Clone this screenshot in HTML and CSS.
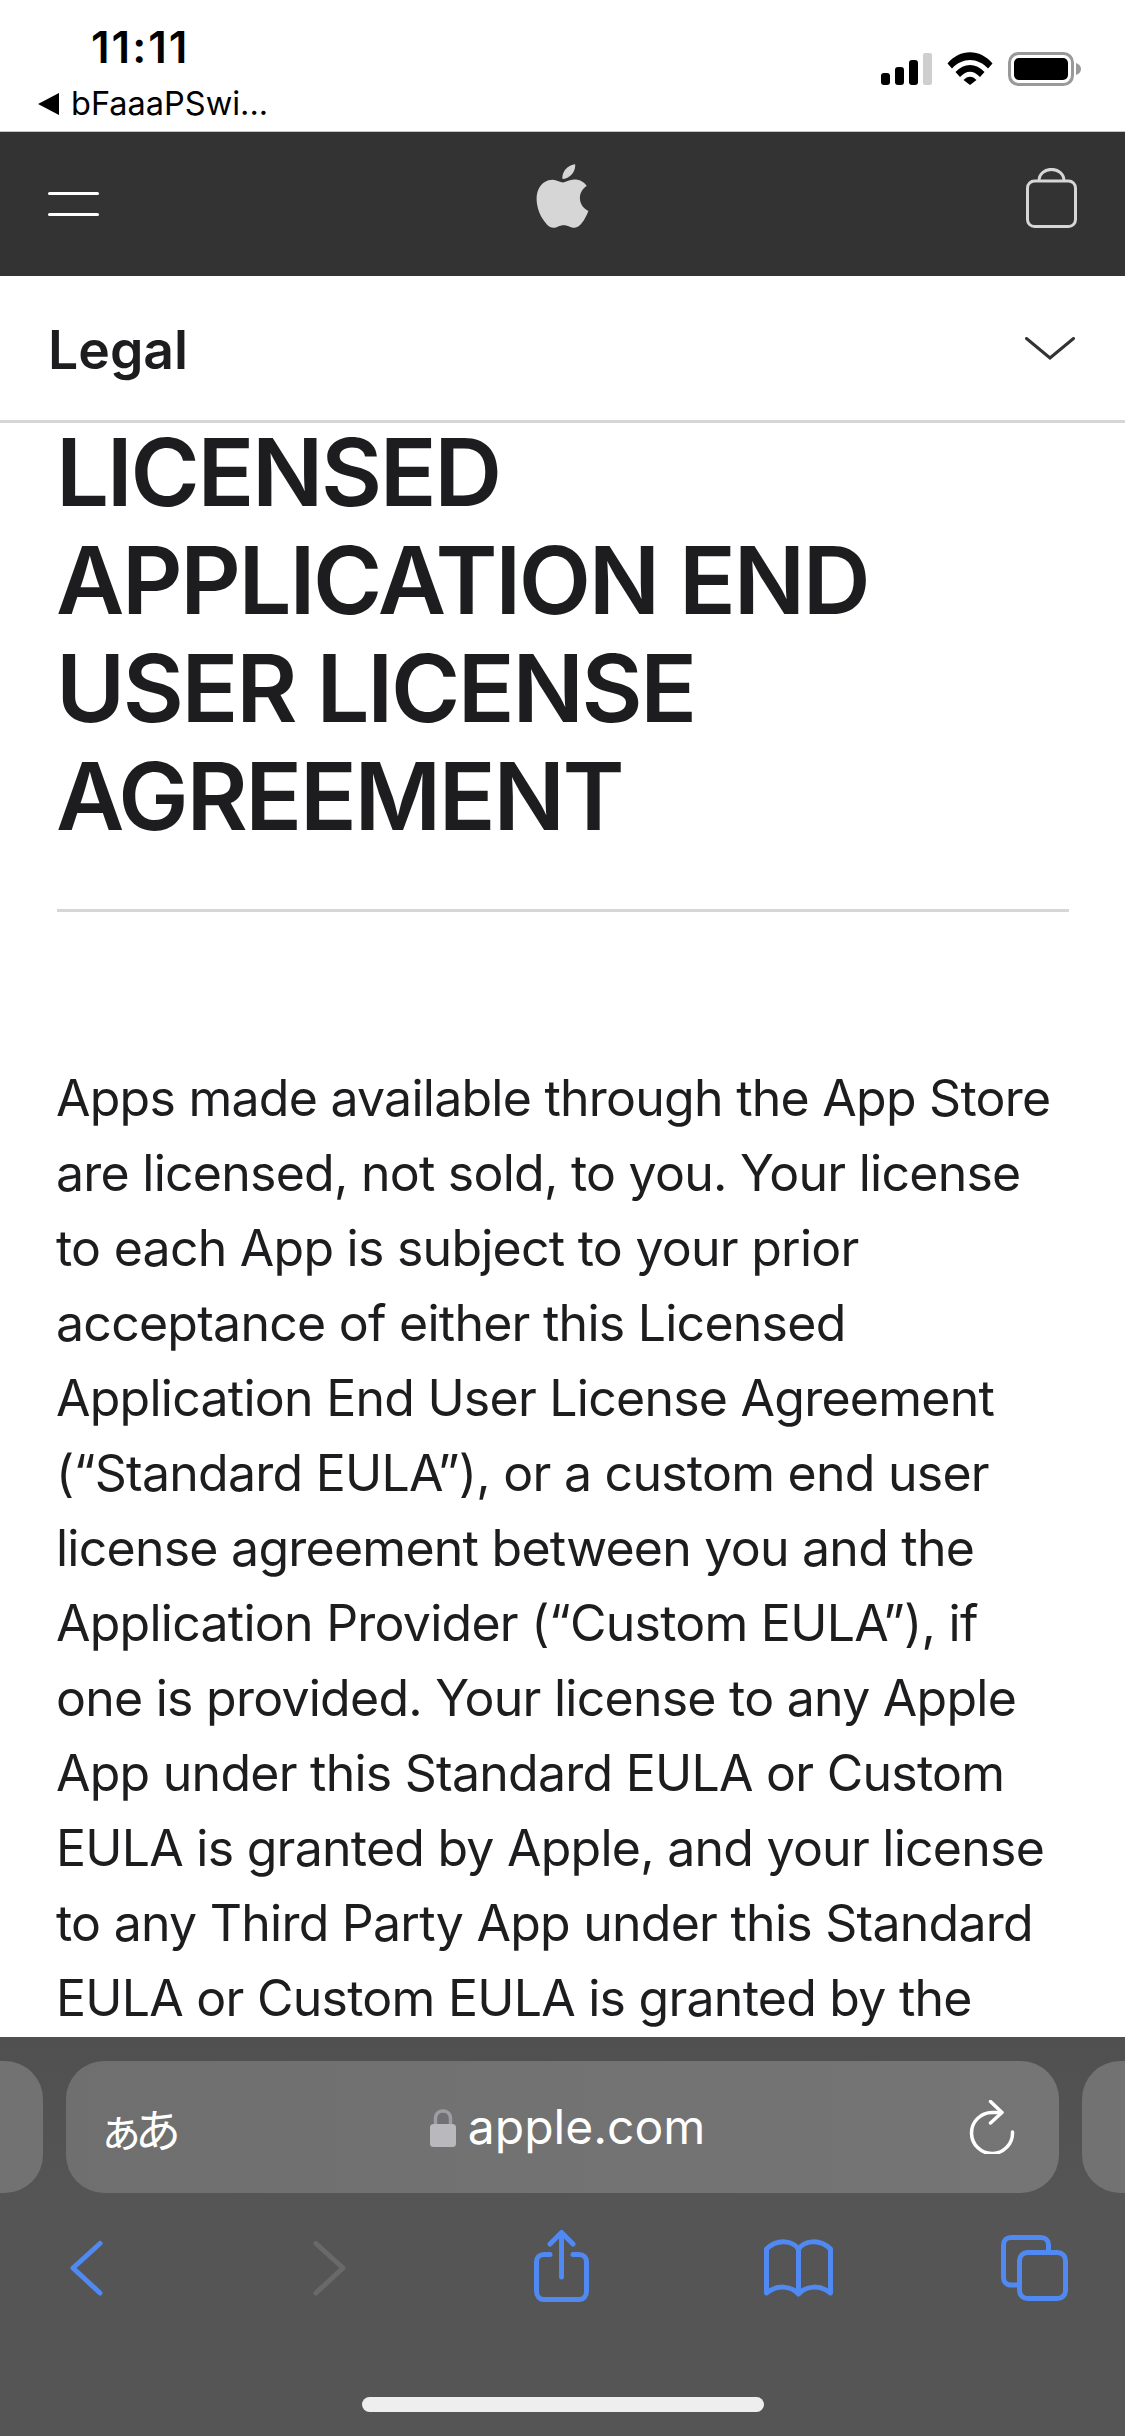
FILE: index.html
```html
<!DOCTYPE html>
<html lang="en">
<head>
    <meta charset="UTF-8">
    <meta name="viewport" content="width=device-width, initial-scale=1.0">
    <title>Licensed Application End User License Agreement</title>
    <link rel="stylesheet" href="styles.css">
</head>
<body>
    <div class="phone">
        <!-- status bar -->
        <div class="status">
            <div class="status-left">
                <div class="time">11:11</div>
                <div class="back-app"><span class="back-arrow"></span>bFaaaPSwi...</div>
            </div>
            <div class="status-right">
                <svg class="ic-signal" viewBox="0 0 51 32">
                    <rect x="0" y="20" width="9" height="12" rx="3" fill="#000"/>
                    <rect x="14" y="14" width="9" height="18" rx="3" fill="#000"/>
                    <rect x="28" y="7" width="9" height="25" rx="3" fill="#000"/>
                    <rect x="42" y="0" width="9" height="32" rx="2" fill="#cfcfcf"/>
                </svg>
                <svg class="ic-wifi" viewBox="0 0 46 33">
                    <path d="M0.5 11.5C13 -3.5 33 -3.5 45.5 11.5L41 16.5C30.5 5 15.5 5 5 16.5Z" fill="#000"/>
                    <path d="M8.5 20C17 10.500 29 10.500 37.500 20L33 25C26 18 20 18 13 25Z" fill="#000"/>
                    <path d="M16.500 28C20.500 23.500 25.500 23.500 29.500 28L23 33Z" fill="#000"/>
                </svg>
                <svg class="ic-battery" viewBox="0 0 74 34">
                    <rect x="1.500" y="1.500" width="63" height="31" rx="9" fill="none" stroke="#999" stroke-width="3"/>
                    <rect x="6" y="6" width="54" height="22" rx="5" fill="#000"/>
                    <path d="M68 11C71 12 73 14 73 17C73 20 71 22 68 23Z" fill="#999"/>
                </svg>
            </div>
        </div>

        <!-- apple nav -->
        <div class="globalnav">
            <div class="burger"><span></span><span></span></div>
            <svg class="ic-apple" viewBox="2 0 20 24">
                <path d="M12.152 6.896c-.948 0-2.415-1.078-3.96-1.04-2.04.027-3.91 1.183-4.961 3.014-2.117 3.675-.546 9.103 1.519 12.09 1.013 1.454 2.208 3.09 3.792 3.039 1.52-.065 2.09-.987 3.935-.987 1.831 0 2.35.987 3.96.948 1.637-.026 2.676-1.48 3.676-2.948 1.156-1.688 1.636-3.325 1.662-3.415-.039-.013-3.182-1.221-3.22-4.857-.026-3.04 2.48-4.494 2.597-4.559-1.429-2.09-3.623-2.324-4.39-2.376-2-.156-3.675 1.09-4.61 1.09zM15.53 3.83c.843-1.012 1.4-2.427 1.245-3.83-1.207.052-2.662.805-3.532 1.818-.78.896-1.454 2.338-1.273 3.714 1.338.104 2.715-.688 3.559-1.701" fill="#d6d6d6"/>
            </svg>
            <svg class="ic-bag" viewBox="0 0 51 60">
                <path d="M13 13C13 -2.500 38 -2.500 38 13" fill="none" stroke="#d6d6d6" stroke-width="3"/>
                <rect x="1.500" y="13" width="48" height="45.500" rx="7" fill="none" stroke="#d6d6d6" stroke-width="3"/>
            </svg>
        </div>

        <div class="subnav">
            <span class="subnav-title">Legal</span>
            <svg class="ic-chevron" viewBox="0 0 50 23">
                <path d="M1.500 1.500L25 21L48.500 1.500" fill="none" stroke="#333" stroke-width="3" stroke-linecap="round"/>
            </svg>
        </div>

        <!-- document -->
        <div class="content">
            <h1>LICENSED<br>APPLICATION END<br>USER LICENSE<br>AGREEMENT</h1>
            <hr class="rule">
            <p class="doc">Apps made available through the App Store<br>are licensed, not sold, to you. Your license<br>to each App is subject to your prior<br>acceptance of either this Licensed<br>Application End User License Agreement<br>(“Standard EULA”), or a custom end user<br>license agreement between you and the<br>Application Provider (“Custom EULA”), if<br>one is provided. Your license to any Apple<br>App under this Standard EULA or Custom<br>EULA is granted by Apple, and your license<br>to any Third Party App under this Standard<br>EULA or Custom EULA is granted by the</p>
        </div>

        <!-- safari bottom bar -->
        <div class="safari">
            <div class="url-row">
                <div class="side-tab side-left"></div>
                <div class="url-pill">
                    <span class="aa">ぁあ</span>
                    <span class="address">
                        <svg class="ic-lock" viewBox="0 0 26 39">
                            <path d="M5.500 18V10.500C5.500 0.500 20.500 0.500 20.500 10.500V18" fill="none" stroke="#9d9da3" stroke-width="3.500"/>
                            <rect x="0" y="16" width="26" height="23" rx="3.500" fill="#b8b8bd"/>
                        </svg>
                        <span>apple.com</span>
                    </span>
                    <svg class="ic-reload" viewBox="0 0 46 54">
                        <path d="M43.500 32A20.500 20.500 0 1 1 23 12.500H31" fill="none" stroke="#fff" stroke-width="3.500" stroke-linecap="round"/>
                        <path d="M21.500 1.500L33 12.500L21.500 23" fill="none" stroke="#fff" stroke-width="3.500" stroke-linecap="round" stroke-linejoin="round"/>
                    </svg>
                </div>
                <div class="side-tab side-right"></div>
            </div>
            <div class="toolbar">
                <svg class="tool" viewBox="0 0 80 72">
                    <path d="M54 13.500L27 38L54 63" fill="none" stroke="#5089f2" stroke-width="5" stroke-linecap="round" stroke-linejoin="round"/>
                </svg>
                <svg class="tool" viewBox="0 0 80 72">
                    <path d="M33 13.500L60 38L33 63" fill="none" stroke="#696969" stroke-width="5" stroke-linecap="round" stroke-linejoin="round"/>
                </svg>
                <svg class="tool" viewBox="0 0 80 72">
                    <g fill="none" stroke="#5089f2" stroke-width="5" stroke-linecap="round" stroke-linejoin="round">
                        <path d="M30 24.500H24C19.500 24.500 16.500 27.500 16.500 32V61C16.500 66 19.500 69.500 24 69.500H59C63.500 69.500 66.500 66 66.500 61V32C66.500 27.500 63.500 24.500 59 24.500H53"/>
                        <path d="M41.500 47V3"/>
                        <path d="M30 14L41.500 2.500L53 14"/>
                    </g>
                </svg>
                <svg class="tool" viewBox="0 0 80 72">
                    <g fill="none" stroke="#5089f2" stroke-width="5" stroke-linecap="round" stroke-linejoin="round">
                        <path d="M41.500 19C36 11 21 8 9.500 19V63C20 55 33 55 41.500 64C50 55 63 55 73.500 63V19C62 8 47 11 41.500 19Z"/>
                        <path d="M41.500 19V63"/>
                    </g>
                </svg>
                <svg class="tool" viewBox="0 0 80 72">
                    <g fill="none" stroke="#5089f2" stroke-width="5" stroke-linecap="round" stroke-linejoin="round">
                        <path d="M24 55H17C12.500 55 9.500 52 9.500 47.500V15C9.500 10.500 12.500 7.500 17 7.500H47C51.500 7.500 54.500 10.500 54.500 15V22"/>
                        <rect x="25.500" y="22.500" width="46" height="46" rx="8"/>
                    </g>
                </svg>
            </div>
            <div class="home-bar"></div>
        </div>
    </div>
</body>
</html>
```

FILE: styles.css
```css
* {
    box-sizing: border-box;
}
html, body {
    margin: 0;
    padding: 0;
}
body {
    font-family: Inter, "Noto Sans", Arial, sans-serif;
    background: #fff;
}
.phone {
    width: 1125px;
    height: 2436px;
    display: flex;
    flex-direction: column;
    overflow: hidden;
}

/* status bar */
.status {
    height: 132px;
    flex: none;
    display: flex;
    justify-content: space-between;
    background: #fff;
    border-bottom: 1px solid #c4c4c4;
}
.status-left {
    padding: 22px 0 0 38px;
}
.time {
    font-size: 44px;
    font-weight: 600;
    line-height: 50px;
    letter-spacing: 2px;
    padding-left: 53px;
    color: #000;
}
.back-app {
    display: flex;
    align-items: center;
    margin-top: 12px;
    font-size: 32.5px;
    line-height: 40px;
    color: #000;
}
.back-arrow {
    width: 0;
    height: 0;
    margin-right: 12px;
    border-top: 11px solid transparent;
    border-bottom: 11px solid transparent;
    border-right: 21px solid #000;
}
.status-right {
    display: flex;
    align-items: flex-start;
    padding: 52px 43px 0 0;
}
.ic-signal {
    width: 51px;
    height: 32px;
    margin-top: 1px;
}
.ic-wifi {
    width: 46px;
    height: 33px;
    margin-left: 15px;
}
.ic-battery {
    width: 74px;
    height: 34px;
    margin-left: 15px;
}

/* nav */
.globalnav {
    height: 144px;
    flex: none;
    background: #333;
    display: flex;
    justify-content: space-between;
    align-items: flex-start;
    padding: 0 48px;
}
.burger {
    width: 51px;
    padding-top: 60px;
}
.burger span {
    display: block;
    height: 3px;
    margin-bottom: 18px;
    background: #fff;
    border-radius: 2px;
}
.ic-apple {
    width: 53px;
    height: 64px;
    margin-top: 32px;
}
.ic-bag {
    width: 51px;
    height: 60px;
    margin-top: 36px;
}
.subnav {
    height: 147px;
    flex: none;
    display: flex;
    justify-content: space-between;
    padding: 0 50px 0 48px;
    border-bottom: 3px solid #d6d6d6;
}
.subnav-title {
    font-size: 53.5px;
    font-weight: 600;
    line-height: 147px;
    color: #1d1d1f;
}
.ic-chevron {
    width: 50px;
    height: 23px;
    margin-top: 61px;
}

/* document */
.content {
    flex: 1;
    min-height: 0;
    padding: 0 56px;
    color: #1d1d1f;
}
h1 {
    margin: -5px 0 0;
    font-size: 94px;
    line-height: 108px;
    font-weight: 600;
    letter-spacing: -2.35px;
    white-space: nowrap;
}
.rule {
    margin: 59px 0 0 1px;
    height: 3px;
    border: none;
    background: #d6d6d6;
}
.doc {
    margin: 149px 0 0;
    font-size: 50px;
    line-height: 75px;
    letter-spacing: -0.75px;
    white-space: nowrap;
}

/* safari bar */
.safari {
    height: 399px;
    flex: none;
    background: linear-gradient(to bottom, #505050, #555 40%);
    padding-top: 24px;
    display: flex;
    flex-direction: column;
}
.url-row {
    display: flex;
    gap: 23px;
    height: 132px;
    flex: none;
}
.side-tab {
    background: #727272;
}
.side-left {
    width: 43px;
    border-radius: 0 38px 38px 0;
}
.side-right {
    width: 43px;
    border-radius: 38px 0 0 38px;
}
.url-pill {
    flex: 1;
    display: flex;
    align-items: center;
    justify-content: space-between;
    padding: 0 44px 0 32px;
    background: linear-gradient(to right, #6f6f6f, #757575);
    border-radius: 38px;
    color: #fff;
}
.aa {
    font-family: "Noto Sans CJK JP", sans-serif;
    font-size: 46px;
    line-height: 60px;
    letter-spacing: -9px;
    width: 68px;
    white-space: nowrap;
}
.address {
    display: flex;
    align-items: center;
    gap: 12px;
    font-size: 48px;
    line-height: 60px;
}
.ic-lock {
    width: 26px;
    height: 39px;
}
.ic-reload {
    width: 46px;
    height: 54px;
}
.toolbar {
    display: flex;
    justify-content: space-between;
    padding: 37px 51px 0 46px;
    flex: none;
}
.tool {
    width: 80px;
    height: 72px;
}
.home-bar {
    width: 402px;
    height: 15px;
    margin: 95px auto 0;
    background: #eee;
    border-radius: 8px;
}
```
